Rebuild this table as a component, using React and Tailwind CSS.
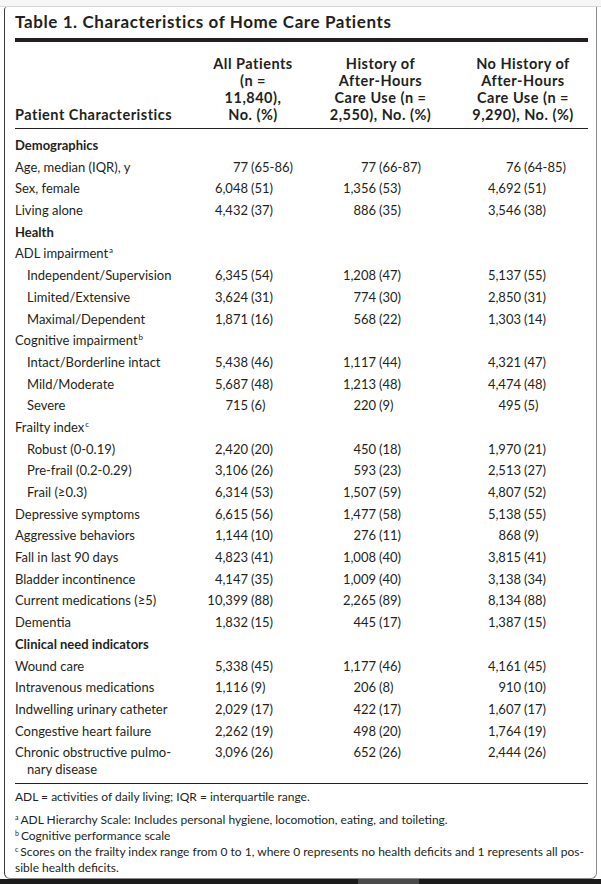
import React from "react";

const rows = [
  { label: "Demographics", head: true },
  { label: "Age, median (IQR), y", v: [["77", "(65-86)"], ["77", "(66-87)"], ["76", "(64-85)"]] },
  { label: "Sex, female", v: [["6,048", "(51)"], ["1,356", "(53)"], ["4,692", "(51)"]] },
  { label: "Living alone", v: [["4,432", "(37)"], ["886", "(35)"], ["3,546", "(38)"]] },
  { label: "Health", head: true },
  { label: "ADL impairment", sup: "a" },
  { label: "Independent/Supervision", sub: true, v: [["6,345", "(54)"], ["1,208", "(47)"], ["5,137", "(55)"]] },
  { label: "Limited/Extensive", sub: true, v: [["3,624", "(31)"], ["774", "(30)"], ["2,850", "(31)"]] },
  { label: "Maximal/Dependent", sub: true, v: [["1,871", "(16)"], ["568", "(22)"], ["1,303", "(14)"]] },
  { label: "Cognitive impairment", sup: "b" },
  { label: "Intact/Borderline intact", sub: true, v: [["5,438", "(46)"], ["1,117", "(44)"], ["4,321", "(47)"]] },
  { label: "Mild/Moderate", sub: true, v: [["5,687", "(48)"], ["1,213", "(48)"], ["4,474", "(48)"]] },
  { label: "Severe", sub: true, v: [["715", "(6)"], ["220", "(9)"], ["495", "(5)"]] },
  { label: "Frailty index", sup: "c" },
  { label: "Robust (0-0.19)", sub: true, v: [["2,420", "(20)"], ["450", "(18)"], ["1,970", "(21)"]] },
  { label: "Pre-frail (0.2-0.29)", sub: true, v: [["3,106", "(26)"], ["593", "(23)"], ["2,513", "(27)"]] },
  { label: "Frail (≥0.3)", sub: true, v: [["6,314", "(53)"], ["1,507", "(59)"], ["4,807", "(52)"]] },
  { label: "Depressive symptoms", v: [["6,615", "(56)"], ["1,477", "(58)"], ["5,138", "(55)"]] },
  { label: "Aggressive behaviors", v: [["1,144", "(10)"], ["276", "(11)"], ["868", "(9)"]] },
  { label: "Fall in last 90 days", v: [["4,823", "(41)"], ["1,008", "(40)"], ["3,815", "(41)"]] },
  { label: "Bladder incontinence", v: [["4,147", "(35)"], ["1,009", "(40)"], ["3,138", "(34)"]] },
  { label: "Current medications (≥5)", v: [["10,399", "(88)"], ["2,265", "(89)"], ["8,134", "(88)"]] },
  { label: "Dementia", v: [["1,832", "(15)"], ["445", "(17)"], ["1,387", "(15)"]] },
  { label: "Clinical need indicators", head: true },
  { label: "Wound care", v: [["5,338", "(45)"], ["1,177", "(46)"], ["4,161", "(45)"]] },
  { label: "Intravenous medications", v: [["1,116", "(9)"], ["206", "(8)"], ["910", "(10)"]] },
  { label: "Indwelling urinary catheter", v: [["2,029", "(17)"], ["422", "(17)"], ["1,607", "(17)"]] },
  { label: "Congestive heart failure", v: [["2,262", "(19)"], ["498", "(20)"], ["1,764", "(19)"]] },
  { label: "Chronic obstructive pulmo-", cont: "nary disease", v: [["3,096", "(26)"], ["652", "(26)"], ["2,444", "(26)"]] },
];

// widths of the number box, so the "(" lines up in each column
const numW = ["w-[48px]", "w-[70px]", "w-[65px]"];

const Value = ({ num, pct, i }) => (
  <div className="flex">
    <span className={`${numW[i]} text-right`}>{num}</span>
    <span className="pl-[3px] whitespace-nowrap">{pct}</span>
  </div>
);

const Row = ({ r }) => (
  <div>
    <div className="grid grid-cols-[185px_106px_150px_131px] h-[21.7px] leading-[21.7px]">
      <div className={`${r.head ? "font-bold" : ""} ${r.sub ? "pl-[12px]" : ""} whitespace-nowrap`}>
        {r.label}
        {r.sup && <sup className="text-[8px] ml-[1px] -top-[5px]">{r.sup}</sup>}
      </div>
      {r.v ? r.v.map((x, i) => <Value key={i} num={x[0]} pct={x[1]} i={i} />) : null}
    </div>
    {r.cont && <div className="pl-[12px] leading-[16px] -mt-[3px]">{r.cont}</div>}
  </div>
);

export default function App() {
  return (
    <div className="w-[601px] h-[884px] bg-white overflow-hidden text-[#231f20] font-['Lato','Liberation_Sans',sans-serif]">
      <div className="h-[7px] bg-[#f6f6f6] border-b border-[#d6d6d6]" />
      <div className="ml-[4px] w-[593px] h-[872px] border-l-[1.5px] border-l-[#3a3a3a] border-r-[1.5px] border-r-[#8a8a8a] border-b border-b-[#8a8a8a] rounded-tl-[3px] rounded-b-[6px] pl-[10px] pr-[8px] flex flex-col">
        <div className="pt-[4px] text-[17px] leading-[22px] font-bold tracking-[0.6px]">Table 1. Characteristics of Home Care Patients</div>
        <div className="mt-[5px] h-[4px] bg-[#231f20]" />

        <div className="grid grid-cols-[185px_106px_150px_131px] items-end pt-[13px] pb-[5px] text-[14.5px] leading-[17px] font-bold tracking-[0.5px]">
          <div>Patient Characteristics</div>
          <div className="text-center">All Patients<br />(n =<br />11,840),<br />No. (%)</div>
          <div className="text-center pr-[1px]">History of<br />After-Hours<br />Care Use (n =<br />2,550), No. (%)</div>
          <div className="text-center pl-[3px]">No History of<br />After-Hours<br />Care Use (n =<br />9,290), No. (%)</div>
        </div>
        <div className="h-[1px] bg-[#231f20]" />

        <div className="pt-[6px] text-[13px]">
          {rows.map((r, i) => <Row key={i} r={r} />)}
        </div>
        <div className="mt-[6px] h-[1px] bg-[#231f20]" />

        <div className="pt-[6px] text-[12px] leading-[14px]">
          <div>ADL = activities of daily living; IQR = interquartile range.</div>
          <div className="mt-[8px] leading-[16px]">
            <div><sup className="text-[7px] mr-[2px]">a</sup>ADL Hierarchy Scale: Includes personal hygiene, locomotion, eating, and toileting.</div>
            <div><sup className="text-[7px] mr-[2px]">b</sup>Cognitive performance scale</div>
            <div><sup className="text-[7px] mr-[2px]">c</sup>Scores on the frailty index range from 0 to 1, where 0 represents no health deficits and 1 represents all pos-<br />sible health deficits.</div>
          </div>
        </div>
      </div>
      <div className="h-[5px] bg-[#1b1b1b] flex">
        <div className="w-[358px]" />
        <div className="w-[61px] bg-[#4a4a4a]" />
      </div>
    </div>
  );
}
